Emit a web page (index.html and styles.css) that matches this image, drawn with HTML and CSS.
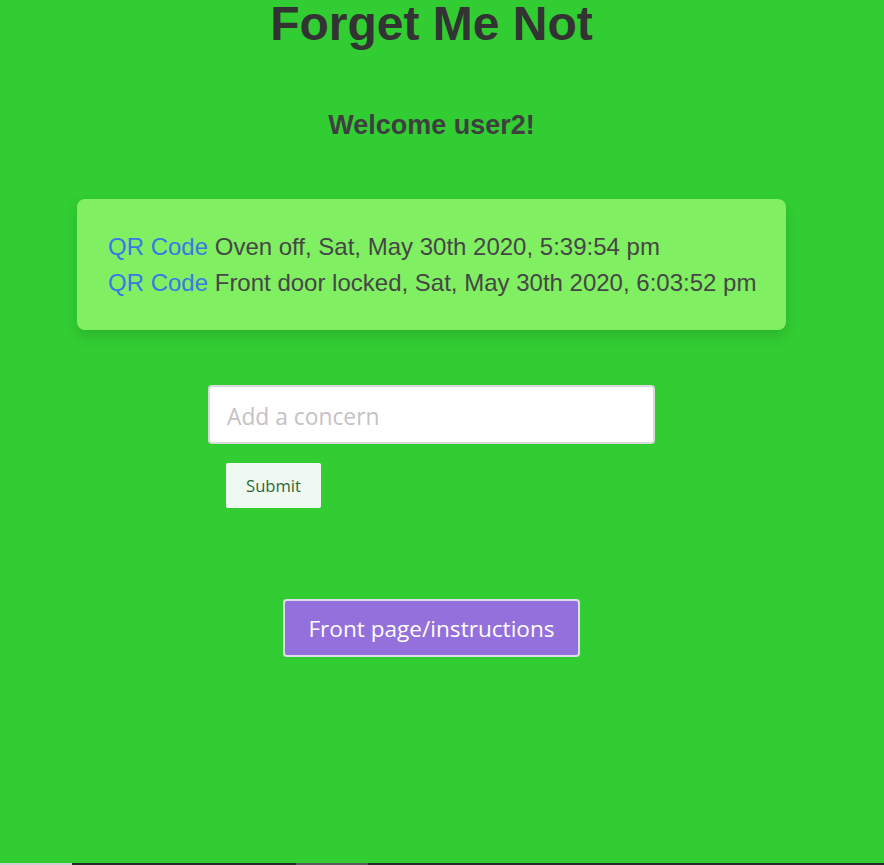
FILE: index.html
```html
<!DOCTYPE html>
<html>
<head>
<meta charset="utf-8">
<link rel="stylesheet" href="styles.css">
</head>
<body>
<main class="page">
  <h1 class="title">Forget Me Not</h1>
  <h2 class="welcome">Welcome user2!</h2>
  <section class="card">
    <div class="item"><a class="qr" href="#">QR Code</a> Oven off, Sat, May 30th 2020, 5:39:54 pm</div>
    <div class="item"><a class="qr" href="#">QR Code</a> Front door locked, Sat, May 30th 2020, 6:03:52 pm</div>
  </section>
  <form class="concern-form">
    <input class="concern-input" type="text" placeholder="Add a concern">
    <button class="submit-btn" type="button">Submit</button>
  </form>
  <button class="front-btn" type="button">Front page/instructions</button>
</main>
<div class="bottom-bar">
  <span class="seg seg-light"></span>
  <span class="seg seg-dark1"></span>
  <span class="seg seg-mid"></span>
  <span class="seg seg-dark2"></span>
</div>
</body>
</html>
```
FILE: styles.css
```css
html, body {
  margin: 0;
  padding: 0;
}
body {
  background: #32cd32;
  font-family: "Liberation Sans", Arial, sans-serif;
  height: 865px;
  overflow: hidden;
}
.page {
  width: 863px;
  display: flex;
  flex-direction: column;
  align-items: center;
}
.title {
  margin: 0;
  font-size: 48px;
  font-weight: bold;
  color: #333333;
  line-height: 48px;
}
.welcome {
  margin: 62px 0 0;
  font-size: 27px;
  font-weight: bold;
  color: #3f3f3f;
  line-height: 31px;
}
.card {
  margin-top: 58px;
  width: 709px;
  box-sizing: border-box;
  padding: 30px 31px 29px;
  background: #80ef62;
  border-radius: 8px;
  box-shadow: 0 6px 14px rgba(0, 0, 0, 0.12);
  font-size: 24px;
  line-height: 36px;
  color: #464646;
}
.item {
  white-space: nowrap;
}
.qr {
  color: #3a78e6;
  text-decoration: none;
}
.concern-form {
  margin-top: 55px;
  width: 447px;
  display: flex;
  flex-direction: column;
  align-items: flex-start;
}
.concern-input {
  width: 447px;
  height: 59px;
  box-sizing: border-box;
  border: 2px solid #d9d9d9;
  border-radius: 4px;
  background: #ffffff;
  padding: 3px 17px 0;
  font-family: "Open Sans", sans-serif;
  font-size: 22.8px;
  color: #333;
  outline: none;
}
.concern-input::placeholder {
  color: #c6c2c2;
}
.submit-btn {
  margin: 19px 0 0 18px;
  width: 95px;
  height: 45px;
  border: none;
  border-radius: 2px;
  background: #f0f8f2;
  color: #2a6a3a;
  font-family: "Open Sans", sans-serif;
  font-size: 16.6px;
  padding: 0;
}
.front-btn {
  margin-top: 91px;
  width: 297px;
  height: 58px;
  box-sizing: border-box;
  border: 2px solid #e2dced;
  border-radius: 4px;
  background: #9370db;
  color: #ffffff;
  font-family: "Open Sans", sans-serif;
  font-size: 22.6px;
  padding: 0;
}
.bottom-bar {
  position: fixed;
  left: 0;
  right: 0;
  bottom: 0;
  height: 2px;
  display: flex;
}
.seg { display: block; height: 2px; }
.seg-light { width: 72px; background: #cfcfcf; }
.seg-dark1 { width: 224px; background: #262b26; }
.seg-mid { width: 72px; background: #5a5a5a; }
.seg-dark2 { flex: 1; background: #262b26; }
```
